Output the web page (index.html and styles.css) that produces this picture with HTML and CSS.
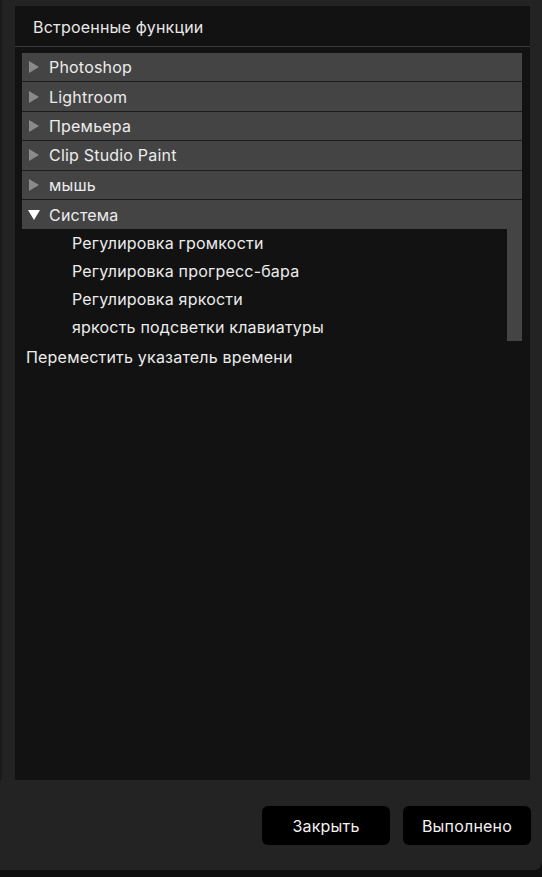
FILE: index.html
```html
<!DOCTYPE html>
<html lang="ru">
<head>
<meta charset="utf-8">
<link rel="stylesheet" href="styles.css">
</head>
<body>
<div class="window">
  <div class="main">
    <div class="edge"></div>
    <div class="panel">
      <div class="panel-header">Встроенные функции</div>
      <div class="tree">
        <div class="group"><span class="tri tri-right"></span><span>Photoshop</span></div>
        <div class="group"><span class="tri tri-right"></span><span>Lightroom</span></div>
        <div class="group"><span class="tri tri-right"></span><span>Премьера</span></div>
        <div class="group"><span class="tri tri-right"></span><span>Clip Studio Paint</span></div>
        <div class="group"><span class="tri tri-right"></span><span>мышь</span></div>
        <div class="group group-open"><span class="tri tri-down"></span><span>Система</span></div>
        <div class="children">
          <div class="child-list">
            <div class="child">Регулировка громкости</div>
            <div class="child">Регулировка прогресс-бара</div>
            <div class="child">Регулировка яркости</div>
            <div class="child">яркость подсветки клавиатуры</div>
          </div>
          <div class="child-bar"></div>
        </div>
        <div class="loose">Переместить указатель времени</div>
      </div>
    </div>
  </div>
  <div class="actions">
    <button class="btn">Закрыть</button>
    <button class="btn">Выполнено</button>
  </div>
</div>
</body>
</html>
```

FILE: styles.css
```css
* { box-sizing: border-box; }
html, body {
  margin: 0;
  padding: 0;
  background: #0f0f0f;
  width: 542px;
  height: 877px;
  overflow: hidden;
  font-family: Inter, "Noto Sans", sans-serif;
  color: #ececec;
}
.window {
  height: 870px;
  background: #232323;
  border-bottom-right-radius: 8px;
  display: flex;
  flex-direction: column;
}
.main {
  display: flex;
  padding-top: 6px;
  height: 780px;
}
.edge {
  width: 2px;
  background: #1a1a1a;
  margin-top: -6px;
  margin-right: 13px;
}
.panel {
  width: 515px;
  background: #121212;
  display: flex;
  flex-direction: column;
}
.panel-header {
  height: 41px;
  padding-left: 18px;
  display: flex;
  align-items: center;
  font-size: 16px;
  letter-spacing: 0.2px;
  color: #e8e8e8;
  border-bottom: 1px solid #3c3c3c;
  padding-top: 1px;
}
.tree {
  padding: 6px 8px 0 7px;
}
.group {
  height: 29.4px;
  background: #444444;
  border-bottom: 1px solid #1c1c1c;
  display: flex;
  align-items: center;
  font-size: 16px;
  letter-spacing: 0.2px;
  color: #ececec;
}
.group-open {
  border-bottom: none;
}
.tri {
  width: 0;
  height: 0;
}
.tri-right {
  border-top: 6px solid transparent;
  border-bottom: 6px solid transparent;
  border-left: 10px solid #8a8a8a;
  margin-left: 7px;
  margin-right: 10px;
}
.tri-down {
  border-left: 6px solid transparent;
  border-right: 6px solid transparent;
  border-top: 10px solid #ffffff;
  margin-left: 6px;
  margin-right: 9px;
}
.children {
  display: flex;
}
.child-list {
  flex: 1;
  background: #121212;
}
.child-bar {
  width: 15px;
  background: #444444;
}
.child {
  height: 28px;
  display: flex;
  align-items: center;
  padding-left: 50px;
  font-size: 16px;
  letter-spacing: 0.2px;
  color: #ececec;
}
.loose {
  height: 32px;
  display: flex;
  align-items: center;
  padding-left: 4px;
  font-size: 16px;
  letter-spacing: 0.2px;
  color: #ececec;
}
.actions {
  display: flex;
  justify-content: flex-end;
  gap: 13px;
  padding: 26px 11px 0 0;
}
.btn {
  width: 128px;
  height: 39px;
  background: #000;
  border: none;
  border-radius: 6px;
  color: #f2f2f2;
  font-family: Inter, "Noto Sans", sans-serif;
  font-size: 16px;
  letter-spacing: 0.2px;
}
```
